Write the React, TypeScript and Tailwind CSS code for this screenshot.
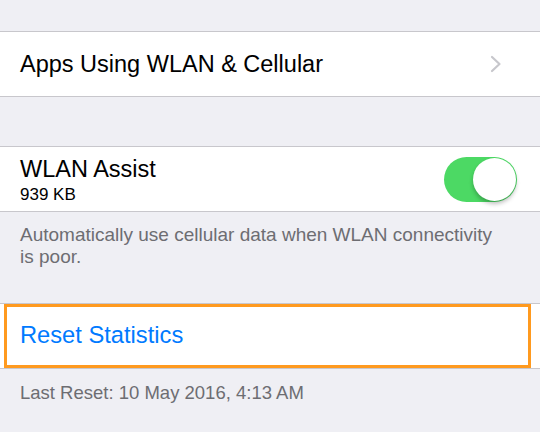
export default function App() {
  return (
    <div
      className="w-[540px] h-[432px] overflow-hidden bg-[#efeff4] relative"
      style={{ fontFamily: '"Liberation Sans", Arial, sans-serif' }}
    >
      <div className="h-[31px]" />
      <div className="border-y border-[#c8c7cc] bg-white h-[66px] flex items-center pl-[20px] pr-[38px]">
        <span className="flex-1 text-[23.5px] text-black leading-none pt-[1px]">Apps Using WLAN &amp; Cellular</span>
        <svg width="12" height="18" viewBox="0 0 12 18" fill="none">
          <path d="M2 2 L9.5 9 L2 16" stroke="#c7c7cc" strokeWidth="2.2" strokeLinecap="round" strokeLinejoin="round" />
        </svg>
      </div>
      <div className="h-[49px]" />
      <div className="border-y border-[#c8c7cc] bg-white h-[66px] flex items-center pl-[20px] pr-[23px]">
        <div className="flex-1 flex flex-col">
          <span className="text-[23.5px] text-black leading-[28px]">WLAN Assist</span>
          <span className="text-[17px] text-black leading-[18px] mt-[3px]">939 KB</span>
        </div>
        <div className="relative w-[73px] h-[45px] rounded-full bg-[#4cd964]">
          <div className="absolute right-[1px] top-[1px] w-[43px] h-[43px] rounded-full bg-white shadow-[0_3px_4px_rgba(0,0,0,0.25)]" />
        </div>
      </div>
      <div className="pl-[20px] pr-[32px] pt-[12px] h-[91px] text-[19px] leading-[22px] text-[#6d6d72]">
        Automatically use cellular data when WLAN connectivity is poor.
      </div>
      <div className="border-y border-[#c8c7cc] bg-white h-[66px] relative">
        <div className="absolute left-[4px] right-[9px] top-0 bottom-0 border-[3px] border-[#ff9a1f]" />
        <div className="h-full flex items-center pl-[20px] text-[23.7px] text-[#007aff]">Reset Statistics</div>
      </div>
      <div className="px-[20px] pt-[13px] text-[18.5px] leading-[22px] text-[#6d6d72]">
        Last Reset: 10 May 2016, 4:13 AM
      </div>
    </div>
  );
}
